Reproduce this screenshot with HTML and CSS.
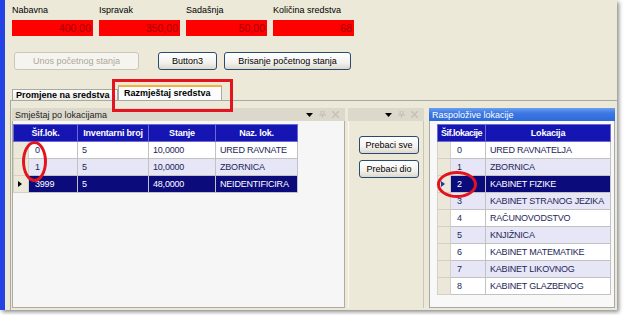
FILE: index.html
```html
<!DOCTYPE html>
<html lang="hr">
<head>
  <meta charset="UTF-8">
  <title>Razmještaj sredstva</title>
  <link rel="stylesheet" href="styles.css">
</head>
<body>
  <div class="shot">
    <div class="window">

      <!-- iznosi -->
      <div class="totals">
        <div class="field"><span class="field-label">Nabavna</span><span class="field-value">400,00</span></div>
        <div class="field"><span class="field-label">Ispravak</span><span class="field-value">350,00</span></div>
        <div class="field"><span class="field-label">Sadašnja</span><span class="field-value">50,00</span></div>
        <div class="field"><span class="field-label">Količina sredstva</span><span class="field-value">68</span></div>
      </div>

      <div class="actions">
        <button class="btn btn-start" disabled>Unos početnog stanja</button>
        <button class="btn btn-three">Button3</button>
        <button class="btn btn-delete">Brisanje početnog stanja</button>
      </div>

      <div class="tabs">
        <span class="tab">Promjene na sredstva</span>
        <span class="tab tab-active">Razmještaj sredstva</span>
      </div>

      <div class="tab-page">
        <!-- lijevi panel -->
        <div class="dock dock-left">
          <div class="dock-head">
            <span class="dock-title">Smještaj po lokacijama</span>
            <span class="dock-tools">
              <svg width="7" height="4" viewBox="0 0 7 4"><path d="M0 0h7L3.5 4z" fill="#000"/></svg>
              <svg width="7" height="7" viewBox="0 0 7 7"><path d="M2 0h3v4H2zM0 4h7M3.5 4v3" fill="none" stroke="#c4c1b4"/></svg>
              <svg width="7" height="7" viewBox="0 0 7 7"><path d="M0 0l7 7M7 0L0 7" stroke="#c4c1b4" stroke-width="1.4"/></svg>
            </span>
          </div>
          <div class="dock-body body-left">
            <table class="grid grid-left">
              <colgroup>
                <col class="c-ind"><col style="width:49px"><col style="width:71px"><col style="width:67px"><col style="width:82px">
              </colgroup>
              <tr class="grid-head">
                <th colspan="2">Šif.lok.</th><th>Inventarni broj</th><th>Stanje</th><th>Naz. lok.</th>
              </tr>
              <tr><td class="ind"></td><td>0</td><td>5</td><td>10,0000</td><td>URED RAVNATE</td></tr>
              <tr class="alt"><td class="ind"></td><td>1</td><td>5</td><td>10,0000</td><td>ZBORNICA</td></tr>
              <tr class="sel"><td class="ind"><span class="marker"></span></td><td>3999</td><td>5</td><td>48,0000</td><td>NEIDENTIFICIRA</td></tr>
            </table>
          </div>
        </div>

        <!-- srednji panel -->
        <div class="dock dock-mid">
          <div class="dock-head">
            <span class="dock-title"></span>
            <span class="dock-tools">
              <svg width="7" height="4" viewBox="0 0 7 4"><path d="M0 0h7L3.5 4z" fill="#000"/></svg>
              <svg width="7" height="7" viewBox="0 0 7 7"><path d="M2 0h3v4H2zM0 4h7M3.5 4v3" fill="none" stroke="#c4c1b4"/></svg>
              <svg width="7" height="7" viewBox="0 0 7 7"><path d="M0 0l7 7M7 0L0 7" stroke="#c4c1b4" stroke-width="1.4"/></svg>
            </span>
          </div>
          <div class="dock-body body-mid">
            <button class="btn btn-move">Prebaci sve</button>
            <button class="btn btn-move">Prebaci dio</button>
          </div>
        </div>

        <!-- desni panel -->
        <div class="dock dock-right">
          <div class="dock-head head-active">Raspoložive lokacije</div>
          <div class="dock-body body-right">
            <table class="grid grid-right">
              <colgroup>
                <col style="width:13px"><col style="width:35px"><col style="width:125px">
              </colgroup>
              <tr class="grid-head"><th colspan="2" class="th-tight">Šif.lokacije</th><th>Lokacija</th></tr>
              <tr><td class="ind"></td><td>0</td><td>URED RAVNATELJA</td></tr>
              <tr class="alt"><td class="ind"></td><td>1</td><td>ZBORNICA</td></tr>
              <tr class="sel"><td class="ind"><span class="marker"></span></td><td>2</td><td>KABINET FIZIKE</td></tr>
              <tr class="alt"><td class="ind"></td><td>3</td><td>KABINET STRANOG JEZIKA</td></tr>
              <tr><td class="ind"></td><td>4</td><td>RAČUNOVODSTVO</td></tr>
              <tr class="alt"><td class="ind"></td><td>5</td><td>KNJIŽNICA</td></tr>
              <tr><td class="ind"></td><td>6</td><td>KABINET MATEMATIKE</td></tr>
              <tr class="alt"><td class="ind"></td><td>7</td><td>KABINET LIKOVNOG</td></tr>
              <tr><td class="ind"></td><td>8</td><td>KABINET GLAZBENOG</td></tr>
            </table>
          </div>
        </div>
      </div>
    </div>

    <!-- oznake preko slike -->
    <div class="mark mark-tab"></div>
    <div class="mark mark-ring mark-left"></div>
    <div class="mark mark-ring mark-right"></div>
  </div>
</body>
</html>
```

FILE: styles.css
```css
* {
  box-sizing: border-box;
}

body {
  margin: 0;
  background: #fff;
  font-family: "Liberation Sans", Arial, sans-serif;
  font-size: 9px;
  color: #000;
}

.shot {
  position: relative;
  width: 624px;
  height: 315px;
  overflow: hidden;
}

/* prozor */
.window {
  width: 617px;
  height: 310px;
  background: #ECE9D8;
  border-left: 5px solid #2443e4;
  box-shadow: 2px 2px 4px rgba(0, 0, 0, 0.45);
  display: flex;
  flex-direction: column;
}

/* iznosi gore */
.totals {
  display: flex;
  gap: 6px;
  padding: 4px 0 0 7px;
}

.field {
  display: flex;
  flex-direction: column;
  gap: 3px;
  width: 81px;
}

.field-label {
  line-height: 13px;
  white-space: nowrap;
}

.field-value {
  height: 16px;
  background: #ff0000;
  color: #a40000;
  text-align: right;
  font-size: 10.5px;
  line-height: 16px;
  padding-right: 2px;
}

/* gumbi */
.actions {
  display: flex;
  margin: 16px 0 0 9px;
}

.btn {
  height: 18px;
  padding: 0;
  font-family: "Liberation Sans", Arial, sans-serif;
  font-size: 9px;
  color: #000;
  border: 1px solid #2b4a72;
  border-radius: 3px;
  background: linear-gradient(#ffffff, #f3f2ee 60%, #dcd8cc);
}

.btn[disabled] {
  color: #aca899;
  border-color: #c9c7ba;
  background: #f5f4ef;
}

.btn-start { width: 125px; }
.btn-three { width: 59px; margin-left: 19px; }
.btn-delete { width: 127px; margin-left: 7px; }

/* kartice */
.tabs {
  display: flex;
  align-items: flex-end;
  height: 15px;
  margin-top: 15px;
  padding-left: 7px;
}

.tab {
  width: 106px;
  height: 11px;
  line-height: 10px;
  padding-left: 3px;
  font-weight: bold;
  white-space: nowrap;
  overflow: hidden;
  border: 1px solid #a5aaa5;
  border-bottom: none;
  background: linear-gradient(#ffffff, #ecebe5);
}

.tab-active {
  width: 104px;
  height: 15px;
  line-height: 13px;
  padding-left: 5px;
  background: #fcfcfe;
  border-top: 2px solid #f5b13e;
}

.tab-page {
  flex: 1;
  display: flex;
  margin-left: 5px;
  padding: 7px 2px 2px 1px;
  border-top: 1px solid #a5aaa5;
  border-left: 1px solid #a5aaa5;
}

/* paneli */
.dock {
  display: flex;
  flex-direction: column;
  height: 200px;
}

.dock-left { width: 333px; }
.dock-mid { width: 76px; margin-left: 3px; }
.dock-right { width: 186px; margin-left: 5px; }

.dock-head {
  height: 13px;
  display: flex;
  align-items: center;
  justify-content: space-between;
  padding: 0 6px 0 3px;
  background: #dcd9cc;
  color: #222;
  white-space: nowrap;
}

.dock-tools {
  display: flex;
  align-items: center;
  gap: 6px;
}

.head-active {
  background: linear-gradient(#6a9ef0, #3b78e2 40%, #2f6bd9);
  color: #fff;
}

.dock-body {
  flex: 1;
}

.body-left {
  background: #f6f6f6;
  border: 1px solid #aeab9f;
  border-top: none;
  padding: 3px 0 0 0;
}

.body-mid {
  display: flex;
  flex-direction: column;
  align-items: flex-start;
  gap: 6px;
  padding: 15px 0 0 10px;
  border-left: 1px solid #fbfaf6;
  border-right: 1px solid #c9c6b8;
}

.btn-move { width: 60px; }

.body-right {
  background: #f8f8f8;
  border: 1px solid #a8a8a8;
  border-top: none;
  padding: 3px 0 0 7px;
}

/* tablice */
.grid {
  border-collapse: collapse;
  table-layout: fixed;
}

.grid-left { width: 284px; }
.grid-right { width: 173px; }

.c-ind { width: 15px; }

.grid th,
.grid td {
  height: 17px;
  padding: 0 0 0 4px;
  border: 1px solid #c2c2c2;
  white-space: nowrap;
  overflow: hidden;
  text-align: left;
  letter-spacing: -0.2px;
}

.grid th {
  background: #1515b4;
  color: #fff;
  font-weight: bold;
  text-align: center;
  border-color: #6a6ad2;
  padding: 0;
}

.grid th.th-tight {
  letter-spacing: -0.5px;
}

.grid td {
  background: #fff;
  color: #1e2658;
}

.grid tr.alt td {
  background: #e6e6f7;
}

.grid tr.sel td {
  background: #0b0b7c;
  color: #fff;
}

.grid td.ind,
.grid tr.alt td.ind,
.grid tr.sel td.ind {
  background: #ebe8d9;
  padding: 0;
  border-color: #d4d1c4;
}

.grid-left td:nth-child(2) { padding-left: 6px; }
.grid-right td:nth-child(2) { padding-left: 6px; }

.marker {
  display: block;
  width: 0;
  height: 0;
  margin-left: 4px;
  border-left: 4px solid #000;
  border-top: 3px solid transparent;
  border-bottom: 3px solid transparent;
}

.grid-right .marker {
  margin-left: 3px;
  border-left-color: #1a3aa0;
}

/* crvene oznake */
.mark {
  position: absolute;
  border: 3px solid #e3141e;
}

.mark-tab {
  left: 112px;
  top: 79px;
  width: 121px;
  height: 33px;
}

.mark-ring {
  border-radius: 50%;
}

.mark-left {
  left: 22px;
  top: 141px;
  width: 25px;
  height: 41px;
}

.mark-right {
  left: 437px;
  top: 171px;
  width: 40px;
  height: 27px;
}
```
